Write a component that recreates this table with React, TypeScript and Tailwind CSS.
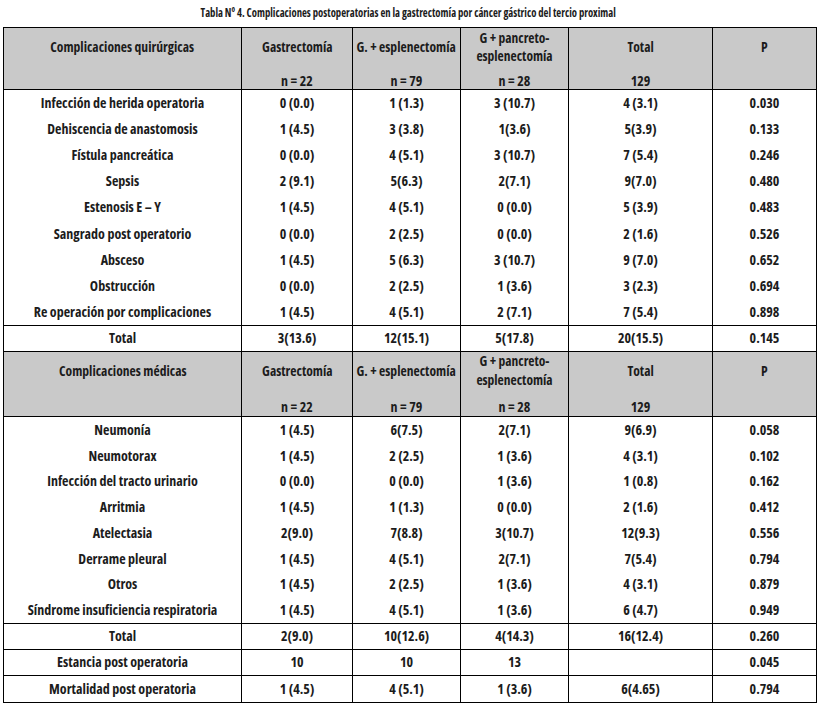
type Row = [string, string, string, string, string, string]

const quirurgicas: Row[] = [
  ["Infección de herida operatoria", "0 (0.0)", "1 (1.3)", "3 (10.7)", "4 (3.1)", "0.030"],
  ["Dehiscencia de anastomosis", "1 (4.5)", "3 (3.8)", "1(3.6)", "5(3.9)", "0.133"],
  ["Fístula pancreática", "0 (0.0)", "4 (5.1)", "3 (10.7)", "7 (5.4)", "0.246"],
  ["Sepsis", "2 (9.1)", "5(6.3)", "2(7.1)", "9(7.0)", "0.480"],
  ["Estenosis E – Y", "1 (4.5)", "4 (5.1)", "0 (0.0)", "5 (3.9)", "0.483"],
  ["Sangrado post operatorio", "0 (0.0)", "2 (2.5)", "0 (0.0)", "2 (1.6)", "0.526"],
  ["Absceso", "1 (4.5)", "5 (6.3)", "3 (10.7)", "9 (7.0)", "0.652"],
  ["Obstrucción", "0 (0.0)", "2 (2.5)", "1 (3.6)", "3 (2.3)", "0.694"],
  ["Re operación por complicaciones", "1 (4.5)", "4 (5.1)", "2 (7.1)", "7 (5.4)", "0.898"],
]

const medicas: Row[] = [
  ["Neumonía", "1 (4.5)", "6(7.5)", "2(7.1)", "9(6.9)", "0.058"],
  ["Neumotorax", "1 (4.5)", "2 (2.5)", "1 (3.6)", "4 (3.1)", "0.102"],
  ["Infección del tracto urinario", "0 (0.0)", "0 (0.0)", "1 (3.6)", "1 (0.8)", "0.162"],
  ["Arritmia", "1 (4.5)", "1 (1.3)", "0 (0.0)", "2 (1.6)", "0.412"],
  ["Atelectasia", "2(9.0)", "7(8.8)", "3(10.7)", "12(9.3)", "0.556"],
  ["Derrame pleural", "1 (4.5)", "4 (5.1)", "2(7.1)", "7(5.4)", "0.794"],
  ["Otros", "1 (4.5)", "2 (2.5)", "1 (3.6)", "4 (3.1)", "0.879"],
  ["Síndrome insuficiencia respiratoria", "1 (4.5)", "4 (5.1)", "1 (3.6)", "6 (4.7)", "0.949"],
]

// column widths incl. right border
const cols = ["w-[238px]", "w-[111px]", "w-[108px]", "w-[108px]", "w-[144px]", "w-[104px]"]

function T({ children }: { children: React.ReactNode }) {
  return <span className="whitespace-nowrap">{children}</span>
}

function Cells({ row }: { row: Row }) {
  return (
    <>
      {row.map((v, i) => (
        <div
          key={i}
          className={`${cols[i]} flex shrink-0 items-center justify-center border-r border-black`}
        >
          {v && <T>{v}</T>}
        </div>
      ))}
    </>
  )
}

function HeaderBlock({ title, tall }: { title: string; tall?: boolean }) {
  const labels = [title, "Gastrectomía", "G. + esplenectomía", "", "Total", "P"]
  const ns = ["", "n = 22", "n = 79", "n = 28", "129", ""]
  return (
    <div
      className={`flex ${tall ? "h-[65px]" : "h-[62px]"} border-b border-black bg-[#c9c9c9]`}
    >
      {labels.map((l, i) => (
        <div
          key={i}
          className={`${cols[i]} flex shrink-0 flex-col border-r border-black`}
        >
          <div className="flex h-[37px] items-center justify-center pt-[1px] text-center">
            {i === 3 ? (
              <span className="text-[13.5px] leading-[18.5px]">
                G + pancreto-
                <br />
                esplenectomía
              </span>
            ) : (
              <span className="inline-block scale-x-[0.97] whitespace-nowrap">{l}</span>
            )}
          </div>
          <div className={`flex flex-1 items-end justify-center ${tall ? "pb-[1px]" : "pb-0"}`}>
            {ns[i] && <T>{ns[i]}</T>}
          </div>
        </div>
      ))}
    </div>
  )
}

export default function App() {
  return (
    <div className="h-[706px] w-[821px] bg-white font-['Open_Sans',sans-serif] text-[14px] leading-[16px] font-bold text-[#1c1c1c] [font-stretch:75%]">
      {/* Title */}
      <div className="flex h-[27px] items-center justify-center pb-[3px] pr-[5px] text-[13px]">
        <span className="inline-block scale-x-[0.82] whitespace-nowrap">
          Tabla Nº 4. Complicaciones postoperatorias en la gastrectomía por cáncer gástrico del tercio proximal
        </span>
      </div>

      {/* Table */}
      <div className="ml-[3px] w-[814px] border border-r-0 border-black">
        <HeaderBlock title="Complicaciones quirúrgicas" />
        {quirurgicas.map((r) => (
          <div key={r[0]} className="flex h-[26.11px]">
            <Cells row={r} />
          </div>
        ))}
        <div className="flex h-[27px] border-y border-black">
          <Cells row={["Total", "3(13.6)", "12(15.1)", "5(17.8)", "20(15.5)", "0.145"]} />
        </div>

        <HeaderBlock title="Complicaciones médicas" tall />
        {medicas.map((r) => (
          <div key={r[0]} className="flex h-[25.75px]">
            <Cells row={r} />
          </div>
        ))}
        <div className="flex h-[27px] border-y border-black">
          <Cells row={["Total", "2(9.0)", "10(12.6)", "4(14.3)", "16(12.4)", "0.260"]} />
        </div>
        <div className="flex h-[26px] border-b border-black">
          <Cells row={["Estancia post operatoria", "10", "10", "13", "", "0.045"]} />
        </div>
        <div className="flex h-[26px]">
          <Cells row={["Mortalidad post operatoria", "1 (4.5)", "4 (5.1)", "1 (3.6)", "6(4.65)", "0.794"]} />
        </div>
      </div>
    </div>
  )
}
